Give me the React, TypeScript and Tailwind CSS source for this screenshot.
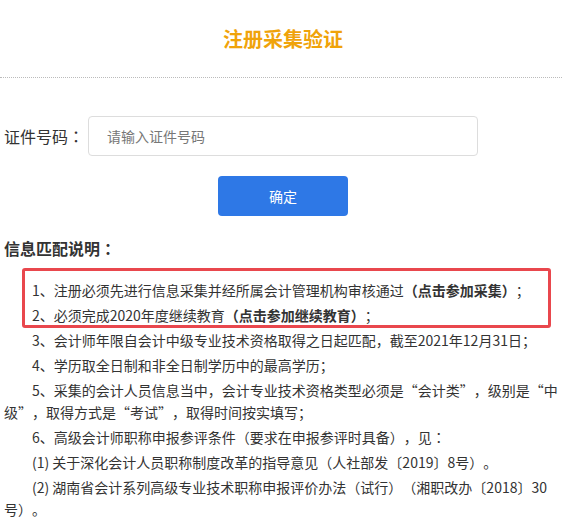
import React from 'react';

const font = { fontFamily: '"Noto Sans CJK SC", "Liberation Sans", sans-serif' };

// 冒号居中显示
const Colon = () => <span className="font-['Noto_Sans_CJK_TC',sans-serif]">：</span>;

export default function App() {
  return (
    <div className="w-[562px] min-h-screen bg-white text-[#333] overflow-hidden [text-spacing-trim:space-all]" style={font}>
      {/* 标题 */}
      <div className="h-[78px] flex items-center justify-center border-b border-dotted border-[#bbb]">
        <h1 className="text-[20px] font-bold text-[#f0a30a] leading-[28px] ml-[4px]">注册采集验证</h1>
      </div>

      {/* 表单 */}
      <div className="mt-[38px] flex items-center px-1">
        <label className="text-[16px] leading-[40px] w-[84px] shrink-0">
          证件号码<Colon />
        </label>
        <input
          className="w-[390px] h-[40px] border border-[#ddd] rounded-[4px] pl-[18px] text-[14px] outline-none placeholder:text-[#777]"
          placeholder="请输入证件号码"
        />
      </div>
      <div className="mt-[20px] flex pl-[218px]">
        <button className="w-[130px] h-[40px] rounded-[4px] bg-[#2e78e6] text-white text-[14px]">确定</button>
      </div>

      {/* 说明 */}
      <div className="mt-[20px] pl-1 pr-[2px]">
        <h2 className="text-[16px] font-bold leading-[24px]">
          信息匹配说明<Colon />
        </h2>
        <div className="mt-[19px] text-[14px] leading-[22px]">
          <div className="relative">
            <p className="indent-[28px] mb-[3px]">
              1、注册必须先进行信息采集并经所属会计管理机构审核通过<b>（点击参加采集）</b>；
            </p>
            <p className="indent-[28px] mb-[3px]">
              2、必须完成2020年度继续教育<b>（点击参加继续教育）</b>；
            </p>
            <div className="absolute left-[18px] top-[-11px] w-[529px] h-[60px] border-[3px] border-[#e9474d] rounded-[3px] pointer-events-none" />
          </div>
          <p className="indent-[28px] mb-[3px]">3、会计师年限自会计中级专业技术资格取得之日起匹配，截至2021年12月31日；</p>
          <p className="indent-[28px] mb-[3px]">4、学历取全日制和非全日制学历中的最高学历；</p>
          <p className="indent-[28px] mb-[3px]">
            5、采集的会计人员信息当中，会计专业技术资格类型必须是“会计类”，级别是“中级”，取得方式是“考试”，取得时间按实填写；
          </p>
          <p className="indent-[28px] mb-[3px]">
            6、高级会计师职称申报参评条件（要求在申报参评时具备），见<Colon />
          </p>
          <p className="indent-[28px] mb-[3px]">(1) 关于深化会计人员职称制度改革的指导意见（人社部发〔2019〕8号）。</p>
          <p className="indent-[28px] mb-[3px]">
            (2) 湖南省会计系列高级专业技术职称申报评价办法（试行）（湘职改办〔2018〕30号）。
          </p>
        </div>
      </div>
    </div>
  );
}
